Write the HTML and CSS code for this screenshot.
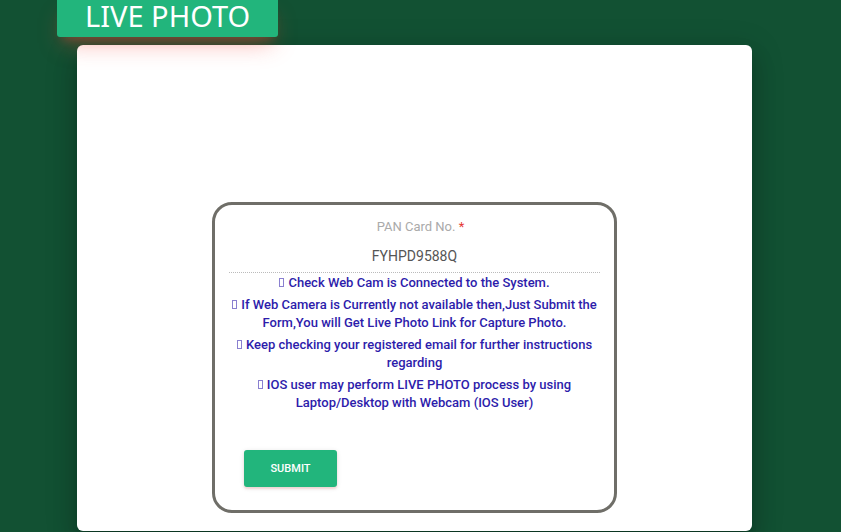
FILE: index.html
```html
<!DOCTYPE html>
<html lang="en">
<head>
    <meta charset="UTF-8">
    <meta name="viewport" content="width=device-width, initial-scale=1.0">
    <title>Live Photo</title>
    <link rel="stylesheet" href="styles.css">
</head>
<body>
    <div class="container">
        <h1 class="page-title">LIVE PHOTO</h1>
        <div class="card">
            <form class="photo-form">
                <label for="panNo">PAN Card No. <span class="required">*</span></label>
                <input type="text" id="panNo" name="panNo" value="FYHPD9588Q" readonly>

                <ul class="instructions">
                    <li>Check Web Cam is Connected to the System.</li>
                    <li>If Web Camera is Currently not available then,Just Submit the Form,You will Get Live Photo Link for Capture Photo.</li>
                    <li>Keep checking your registered email for further instructions regarding</li>
                    <li>IOS user may perform LIVE PHOTO process by using Laptop/Desktop with Webcam (IOS User)</li>
                </ul>

                <button type="submit" class="btn-submit">SUBMIT</button>
            </form>
        </div>
    </div>
</body>
</html>
```
FILE: styles.css
```css
* {
    box-sizing: border-box;
}
body {
    margin: 0;
    background-color: #125133;
    font-family: Roboto, "Liberation Sans", sans-serif;
    color: #555;
}
.container {
    display: flex;
    flex-direction: column;
    padding: 0 89px 1px 77px;
}

/* title tab, its shadow falls on the card */
.page-title {
    position: relative;
    z-index: 1;
    align-self: flex-start;
    margin: 0 0 8px -20px;
    padding: 0 28px 5px;
    border-radius: 0 0 3px 3px;
    background-color: #22b57c;
    box-shadow: 0 12px 24px -6px rgba(244, 67, 54, 0.4), 0 7px 10px -5px rgba(244, 67, 54, 0.3);
    color: #fff;
    font-family: "Noto Sans", sans-serif;
    font-size: 29px;
    font-weight: 400;
    line-height: 32px;
}

.card {
    padding: 157px 20% 18px;
    border-radius: 6px;
    background-color: #fff;
    box-shadow: 0 16px 24px 2px rgba(0, 0, 0, 0.14), 0 6px 30px 5px rgba(0, 0, 0, 0.12), 0 8px 10px -5px rgba(0, 0, 0, 0.2);
}
.photo-form {
    padding: 12px 14px 23px;
    border: 3px solid #6f6e68;
    border-radius: 20px;
    text-align: center;
}
.photo-form label {
    display: block;
    padding-left: 12px;
    color: #aaa;
    font-size: 13px;
    line-height: 20px;
}
.required {
    color: #e53935;
}
.photo-form input {
    display: block;
    width: 100%;
    height: 36px;
    padding: 2px 0 0;
    border: 0;
    border-bottom: 1px dotted #bbb;
    background: none;
    color: #555;
    font-family: inherit;
    font-size: 14px;
    text-align: center;
    outline: none;
}

.instructions {
    margin: 0;
    padding: 1px 0 0;
    list-style: none;
    color: #2d1cab;
    font-size: 13px;
    font-weight: 500;
    line-height: 18px;
}
.instructions li {
    margin-bottom: 4px;
}
/* small hollow box as the bullet */
.instructions li::before {
    content: "";
    display: inline-block;
    box-sizing: border-box;
    width: 5px;
    height: 9px;
    margin-right: 4px;
    border: 1px solid #8a80d0;
}

.btn-submit {
    display: block;
    width: 93px;
    height: 37px;
    margin: 38px 0 0 15px;
    padding: 0;
    border: 0;
    border-radius: 3px;
    background-color: #22b57c;
    box-shadow: 0 2px 2px 0 rgba(244, 67, 54, 0.14), 0 1px 5px 0 rgba(0, 0, 0, 0.12);
    color: #fff;
    font-family: inherit;
    font-size: 11px;
    font-weight: 500;
    cursor: pointer;
}
```
